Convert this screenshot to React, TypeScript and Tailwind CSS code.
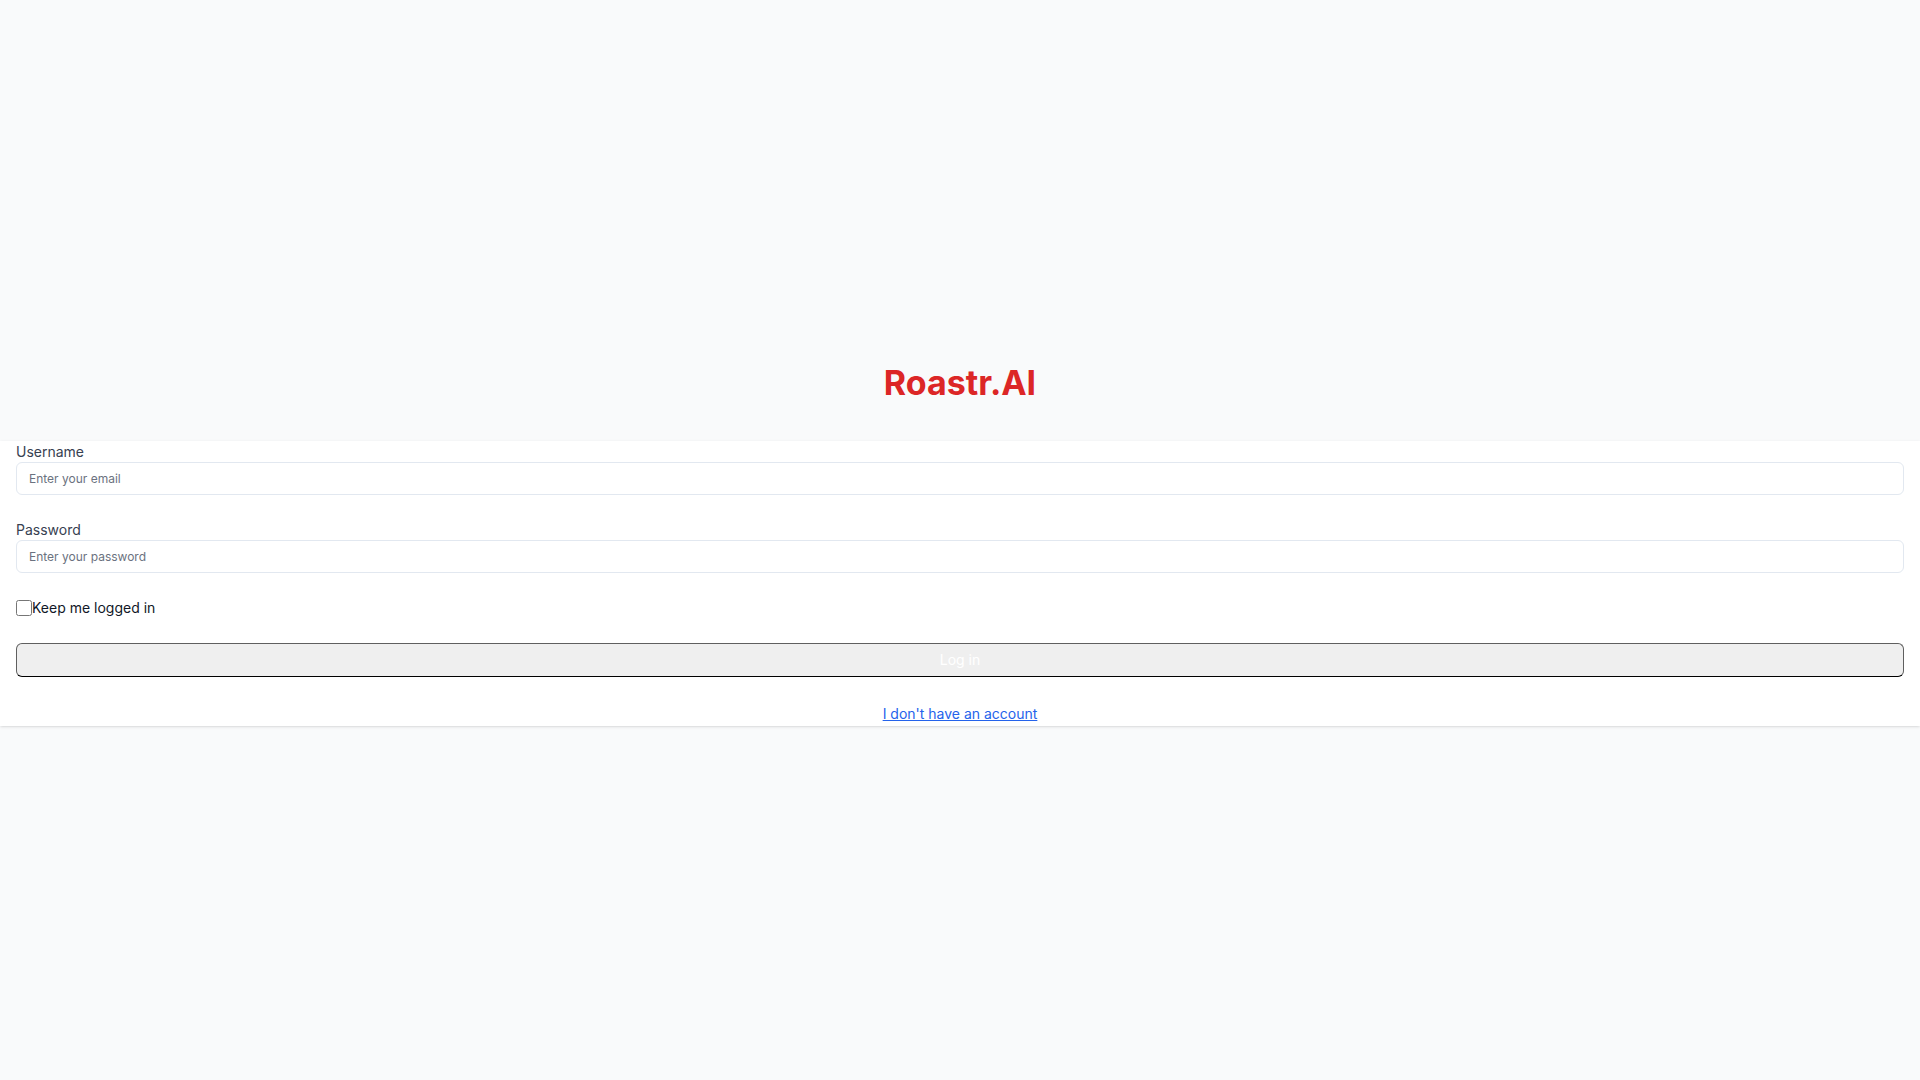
import { useState } from 'react';

function Field({ label, type, placeholder }: { label: string; type: string; placeholder: string }) {
  return (
    <div className="flex flex-col">
      <label className="text-sm leading-5 text-[#374151]">{label}</label>
      <input
        type={type}
        placeholder={placeholder}
        className="h-[33px] w-full rounded-md border border-[#e2e8f0] bg-white px-3 text-xs text-[#111827] placeholder:text-[#6b7280] outline-none"
      />
    </div>
  );
}

export default function App() {
  const [keep, setKeep] = useState(false);

  return (
    <div className="flex min-h-screen flex-col justify-center bg-[#f9fafb] pt-[8px] font-['Inter',sans-serif]">
      <h1 className="text-center text-[34px] leading-10 font-bold text-[#dc2626]">Roastr.AI</h1>

      <form
        className="mt-[38px] bg-white px-4 pt-[1px] pb-[1px] shadow-sm"
        onSubmit={(e) => e.preventDefault()}
      >
        <Field label="Username" type="email" placeholder="Enter your email" />
        <div className="mt-[25px]">
          <Field label="Password" type="password" placeholder="Enter your password" />
        </div>

        <label className="mt-[25px] flex items-center text-sm leading-5 text-[#111827]">
          <input
            type="checkbox"
            checked={keep}
            onChange={(e) => setKeep(e.target.checked)}
            className="h-4 w-4"
          />
          Keep me logged in
        </label>

        <button
          type="submit"
          className="mt-[25px] h-[34px] w-full rounded-md border border-[#5f5f5f] border-b-black bg-[#efefef] text-sm text-white"
        >
          Log in
        </button>

        <div className="mt-6 text-center">
          <a href="#" className="text-sm leading-5 text-[#2563eb] underline">
            I don't have an account
          </a>
        </div>
      </form>
    </div>
  );
}
